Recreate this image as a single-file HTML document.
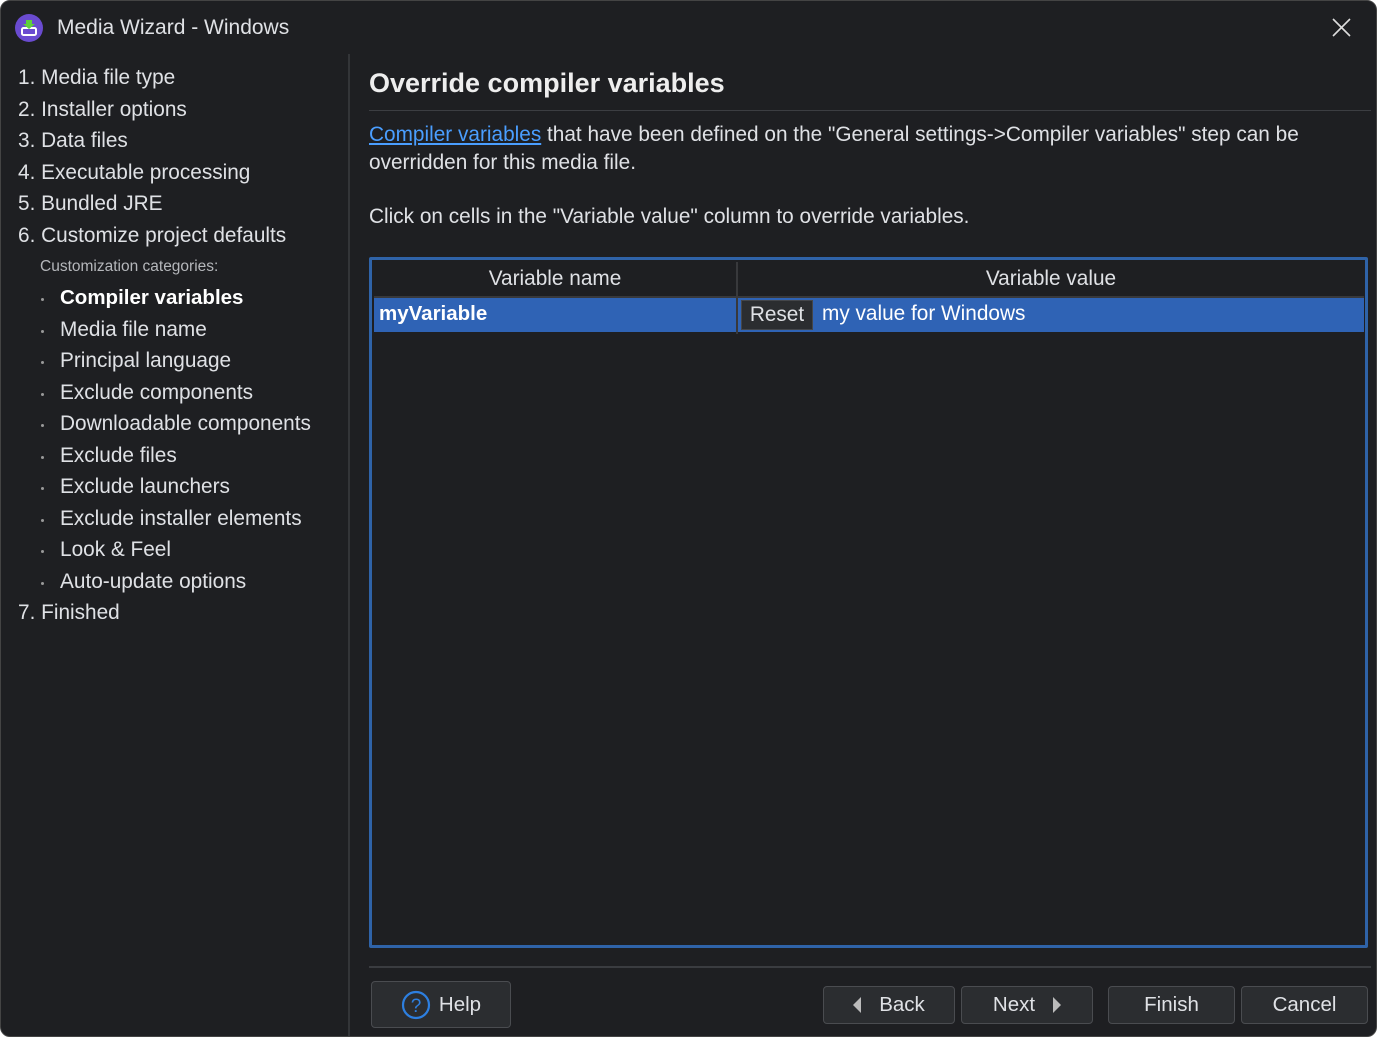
<!DOCTYPE html>
<html><head><meta charset="utf-8"><style>
*{margin:0;padding:0;box-sizing:border-box}
html,body{width:1377px;height:1037px;overflow:hidden;background:#fff}
body{font-family:"Liberation Sans","DejaVu Sans",sans-serif;color:#dfe1e5;font-size:20.8px}
.win{position:absolute;left:0;top:0;width:1377px;height:1037px;background:#1e1f22;border:1px solid #444;border-radius:10px;overflow:hidden}
.a{position:absolute;white-space:nowrap}
.nav{left:17px}
.sub{left:59px}
.dot{position:absolute;left:40px;width:3px;height:3px;border-radius:2px;background:#999}
.btn{position:absolute;top:985px;height:38px;background:#2b2d30;border:1px solid #4a4c50;border-radius:4px;color:#dfe1e5;font-size:20.5px;display:flex;align-items:center;justify-content:center}
</style></head><body><div class="win">
<svg class="a" style="left:14px;top:13px" width="28" height="28" viewBox="0 0 28 28"><circle cx="14" cy="14" r="14" fill="#6a4bd0"/><rect x="7" y="14" width="14" height="7" rx="1.5" fill="none" stroke="#fff" stroke-width="2"/><path d="M11 6h6v4h3l-6 5-6-5h3z" fill="#5fcf3c"/></svg>
<div class="a" style="left:56px;top:15px;font-size:21px">Media Wizard - Windows</div>
<svg class="a" style="left:1330px;top:16px" width="21" height="21" viewBox="0 0 21 21"><path d="M2 2L19 19M19 2L2 19" stroke="#ddd" stroke-width="1.6"/></svg>
<div class="a" style="left:347px;top:53px;width:2px;height:984px;background:#333538"></div>

<div class="a nav" style="top:65px">1. Media file type</div>
<div class="a nav" style="top:97px">2. Installer options</div>
<div class="a nav" style="top:128px">3. Data files</div>
<div class="a nav" style="top:160px">4. Executable processing</div>
<div class="a nav" style="top:191px">5. Bundled JRE</div>
<div class="a nav" style="top:223px">6. Customize project defaults</div>
<div class="a" style="left:39px;top:257px;font-size:15.5px;color:#b5b7bb">Customization categories:</div>
<div class="dot" style="top:297px"></div><div class="a sub" style="top:285px;font-weight:bold;color:#fff;font-size:20.5px">Compiler variables</div>
<div class="dot" style="top:329px"></div><div class="a sub" style="top:317px">Media file name</div>
<div class="dot" style="top:360px"></div><div class="a sub" style="top:348px">Principal language</div>
<div class="dot" style="top:392px"></div><div class="a sub" style="top:380px">Exclude components</div>
<div class="dot" style="top:423px"></div><div class="a sub" style="top:411px">Downloadable components</div>
<div class="dot" style="top:455px"></div><div class="a sub" style="top:443px">Exclude files</div>
<div class="dot" style="top:486px"></div><div class="a sub" style="top:474px">Exclude launchers</div>
<div class="dot" style="top:518px"></div><div class="a sub" style="top:506px">Exclude installer elements</div>
<div class="dot" style="top:549px"></div><div class="a sub" style="top:537px">Look &amp; Feel</div>
<div class="dot" style="top:581px"></div><div class="a sub" style="top:569px">Auto-update options</div>
<div class="a nav" style="top:600px">7. Finished</div>

<div class="a" style="left:368px;top:67px;font-size:27px;font-weight:bold;color:#eee">Override compiler variables</div>
<div class="a" style="left:368px;top:109px;width:1002px;height:1px;background:#3c3e42"></div>
<div class="a" style="left:368px;top:122px"><span style="color:#4a9eff;text-decoration:underline">Compiler variables</span> that have been defined on the "General settings-&gt;Compiler variables" step can be</div>
<div class="a" style="left:368px;top:150px">overridden for this media file.</div>
<div class="a" style="left:368px;top:204px">Click on cells in the "Variable value" column to override variables.</div>

<div class="a" style="left:368px;top:256px;width:999px;height:691px;border:3px solid #2f63a8;border-radius:2px">
 <div class="a" style="left:2px;top:2px;width:990px;height:36px;border-bottom:2px solid #38393c"></div>
 <div class="a" style="left:364px;top:2px;width:2px;height:72px;background:#38393c"></div>
 <div class="a" style="left:2px;top:7px;width:362px;text-align:center">Variable name</div>
 <div class="a" style="left:366px;top:7px;width:626px;text-align:center">Variable value</div>
 <div class="a" style="left:2px;top:38px;width:362px;height:34px;background:#2f63b5"></div>
 <div class="a" style="left:366px;top:38px;width:626px;height:34px;background:#2f63b5"></div>
 <div class="a" style="left:7px;top:42px;font-weight:bold;color:#fff;font-size:20.5px">myVariable</div>
 <div class="a" style="left:369px;top:40px;width:72px;height:30px;background:#2b2d30;border:1px solid #44464a;text-align:center;line-height:28px">Reset</div>
 <div class="a" style="left:450px;top:42px;color:#fff">my value for Windows</div>
</div>
<div class="a" style="left:368px;top:965px;width:1002px;height:2px;background:#3a3c40"></div>

<div class="btn" style="left:370px;top:980px;width:140px;height:47px"><svg width="30" height="30" viewBox="0 0 30 30" style="margin-right:8px"><circle cx="15" cy="15" r="13" fill="none" stroke="#2d7fe0" stroke-width="2.2"/><text x="15" y="22" text-anchor="middle" font-size="19" fill="#2d7fe0" font-family="Liberation Sans">?</text></svg>Help</div>
<div class="btn" style="left:822px;width:132px"><span style="display:inline-block;border:8px solid transparent;border-right:8px solid #bbb;border-left:0;height:0;margin-right:18px"></span>Back</div>
<div class="btn" style="left:960px;width:132px">Next<span style="display:inline-block;border:8px solid transparent;border-left:8px solid #bbb;border-right:0;height:0;margin-left:18px"></span></div>
<div class="btn" style="left:1107px;width:127px">Finish</div>
<div class="btn" style="left:1240px;width:127px">Cancel</div>
</div></body></html>
